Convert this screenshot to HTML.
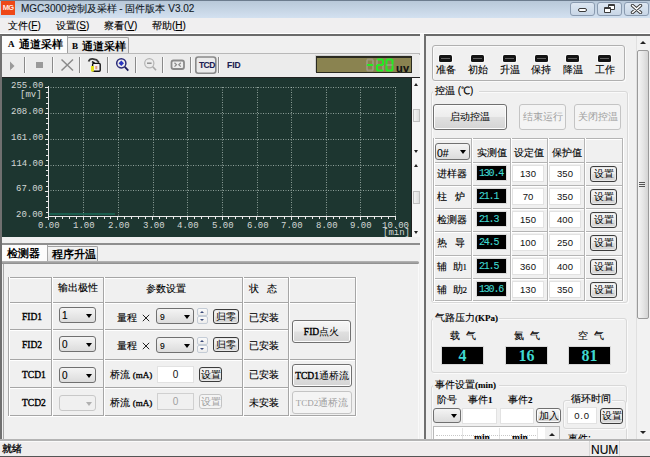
<!DOCTYPE html>
<html><head><meta charset="utf-8">
<style>
*{box-sizing:border-box;margin:0;padding:0}
html,body{width:650px;height:457px;overflow:hidden;background:#f0f0f0;font-family:"Liberation Sans",sans-serif;font-size:10px;color:#000;font-weight:500}
.a{position:absolute}
.t{position:absolute;white-space:nowrap;line-height:1;-webkit-text-stroke:0.12px currentColor}
.btn{position:absolute;border:1px solid #707070;border-radius:3px;background:linear-gradient(#f6f6f6 0%,#ededed 48%,#e0e0e0 52%,#d4d4d4 100%);box-shadow:inset 0 0 0 1px #fcfcfc;text-align:center;white-space:nowrap}
.dbtn{position:absolute;border:1px solid #c4c4c4;border-radius:3px;background:#f4f4f4;color:#a0a0a0;text-align:center;white-space:nowrap}
.combo{position:absolute;border:1px solid #707070;border-radius:3px;background:linear-gradient(#f4f4f4,#dcdcdc)}
.combo:after{content:"";position:absolute;right:3px;top:50%;margin-top:-1.5px;border-left:3.5px solid transparent;border-right:3.5px solid transparent;border-top:4px solid #000}
.inp{position:absolute;background:#fff;border:1px solid #e2e2e2;text-align:center;font-size:9.5px;color:#111}
.blk{position:absolute;background:#000;color:#3fd8d0;border:1px solid #d8d8d8}
.gb{position:absolute;border:1px solid #d8d8d8;border-radius:3px;box-shadow:inset 1px 1px 0 #fafafa,1px 1px 0 #fafafa}
.gb.dk{border-color:#b0b0b0}
.combo.dis{border-color:#c8c8c8;background:#f0f0f0}
.combo.dis:after{border-top-color:#b0b0b0}
.spin{position:absolute;width:11px;height:16px}
.spin:before{content:"";position:absolute;left:0;top:0;width:11px;height:8px;box-sizing:border-box;border:1px solid #c4ccd6;border-radius:2px;background:linear-gradient(#fafafa,#ececec)}
.spin:after{content:"";position:absolute;left:0;top:8px;width:11px;height:8px;box-sizing:border-box;border:1px solid #c4ccd6;border-radius:2px;background:linear-gradient(#fafafa,#ececec)}
.spin i{position:absolute;left:3px;border-left:2.5px solid transparent;border-right:2.5px solid transparent;z-index:1}
.spin i.u{top:3px;border-bottom:2.5px solid #3a4a7a}
.spin i.d{top:11px;border-top:2.5px solid #3a4a7a}
.led{position:absolute;width:13px;height:7px;background:#141414;border-radius:1.5px;box-shadow:0 0 0 1px #fafafa}
.led:after{content:"";position:absolute;left:2px;top:3px;width:9px;height:1px;background:#606060}
.dig{font-family:"Liberation Mono",monospace;font-size:10px;letter-spacing:-1.2px;color:#3fd8d0}
.big{font-family:"Liberation Serif",serif;font-weight:bold;font-size:16px;line-height:17px;text-align:center}
.fb{border:1px solid #3c3c3c;box-shadow:inset 0 0 0 1px #e8e8e8}
.cell{position:absolute;border:1px solid #a9a9a9;box-shadow:inset 1px 1px 0 #fff}
</style></head><body>

<!-- title bar -->
<div class="a" style="left:0;top:0;width:650px;height:18px;background:linear-gradient(#b8c8d9,#d3e1f0);border-top:1px solid #6c7c8e"></div>
<div class="a" style="left:1px;top:1px;width:14px;height:14px;background:#ee4818;color:#ffe8e0;font-size:7.5px;font-weight:bold;line-height:14px;text-align:center;letter-spacing:-0.8px">MG</div>
<div class="t" style="left:21px;top:4px;font-size:10px;color:#141c28">MGC3000控制及采样 - 固件版本 V3.02</div>
<div class="a" style="left:570px;top:2px;width:25px;height:14px;border:1px solid #8a9bb0;border-radius:3px;background:linear-gradient(#dde7f2,#c8d6e6)"></div>
<div class="a" style="left:578px;top:8px;width:9px;height:4px;border:1px solid #3a3a3a;background:#fff;border-radius:2px"></div>
<div class="a" style="left:597px;top:2px;width:25px;height:14px;border:1px solid #8a9bb0;border-radius:3px;background:linear-gradient(#dde7f2,#c8d6e6)"></div>
<div class="a" style="left:608px;top:4px;width:7px;height:6px;border:1px solid #3a3a3a;border-top-width:2px;background:#fff;border-radius:1px"></div>
<div class="a" style="left:604px;top:7px;width:7px;height:6px;border:1px solid #3a3a3a;border-top-width:2px;background:#fff;border-radius:1px"></div>
<div class="a" style="left:624px;top:2px;width:25px;height:14px;border:1px solid #8a9bb0;border-radius:3px;background:linear-gradient(#dde7f2,#c8d6e6)"></div>
<svg class="a" style="left:630px;top:4px" width="13" height="10"><path d="M2.5 1.5 L10.5 8.5 M10.5 1.5 L2.5 8.5" stroke="#3a3a3a" stroke-width="3.4" stroke-linecap="round"/><path d="M2.5 1.5 L10.5 8.5 M10.5 1.5 L2.5 8.5" stroke="#fff" stroke-width="1.6" stroke-linecap="round"/></svg>

<!-- menu bar -->
<div class="a" style="left:0;top:18px;width:650px;height:15px;background:#f0eff0"></div>
<div class="a" style="left:0;top:33px;width:650px;height:1px;background:#fff"></div>
<div class="t" style="left:8px;top:21px;font-size:10px">文件(<u>F</u>)</div>
<div class="t" style="left:56px;top:21px;font-size:10px">设置(<u>S</u>)</div>
<div class="t" style="left:104px;top:21px;font-size:10px">察看(<u>V</u>)</div>
<div class="t" style="left:152px;top:21px;font-size:10px">帮助(<u>H</u>)</div>

<!-- left pane frame -->
<div class="a" style="left:0;top:34px;width:421px;height:405px;border-top:2px solid #6a6a6a;border-left:2px solid #707070;background:#f0f0f0"></div>

<!-- tabs A/B -->
<div class="a" style="left:2px;top:53px;width:419px;height:2px;background:#b8b8b8"></div>
<div class="a" style="left:2px;top:36px;width:66px;height:17px;background:#fcfcfc;border-right:1px solid #a8a8a8"></div>
<div class="t" style="left:8px;top:40px;font-size:9px;font-weight:bold;font-family:'Liberation Serif',serif">A</div>
<div class="t" style="left:19px;top:39px;font-size:10.5px;font-weight:bold;-webkit-text-stroke:0">通道采样</div>
<div class="a" style="left:67px;top:37px;width:62px;height:16px;background:linear-gradient(#f2f2f2,#e4e4e4);border:1px solid #a0a0a0;border-bottom:none;border-radius:2px 2px 0 0"></div>
<div class="t" style="left:72px;top:42px;font-size:9px;font-weight:bold;font-family:'Liberation Serif',serif">B</div>
<div class="t" style="left:82px;top:41px;font-size:10.5px;font-weight:bold;-webkit-text-stroke:0">通道采样</div>

<!-- toolbar -->
<div class="a" style="left:2px;top:54px;width:417px;height:23px;background:#ececec"></div>
<svg class="a" style="left:0;top:50px" width="420" height="28" viewBox="0 50 420 28">
 <g shape-rendering="crispEdges" stroke-width="1"><line x1="24.5" y1="57" x2="24.5" y2="73" stroke="#8a8a8a"/><line x1="25.5" y1="57" x2="25.5" y2="73" stroke="#fafafa"/><line x1="52.5" y1="57" x2="52.5" y2="73" stroke="#8a8a8a"/><line x1="53.5" y1="57" x2="53.5" y2="73" stroke="#fafafa"/><line x1="79.5" y1="57" x2="79.5" y2="73" stroke="#8a8a8a"/><line x1="80.5" y1="57" x2="80.5" y2="73" stroke="#fafafa"/><line x1="107.5" y1="57" x2="107.5" y2="73" stroke="#8a8a8a"/><line x1="108.5" y1="57" x2="108.5" y2="73" stroke="#fafafa"/><line x1="135.5" y1="57" x2="135.5" y2="73" stroke="#8a8a8a"/><line x1="136.5" y1="57" x2="136.5" y2="73" stroke="#fafafa"/><line x1="162.5" y1="57" x2="162.5" y2="73" stroke="#8a8a8a"/><line x1="163.5" y1="57" x2="163.5" y2="73" stroke="#fafafa"/><line x1="190.5" y1="57" x2="190.5" y2="73" stroke="#8a8a8a"/><line x1="191.5" y1="57" x2="191.5" y2="73" stroke="#fafafa"/><line x1="218.5" y1="57" x2="218.5" y2="73" stroke="#8a8a8a"/><line x1="219.5" y1="57" x2="219.5" y2="73" stroke="#fafafa"/></g>
 <path d="M10 61.5 L14.5 66 L10 70.5Z" fill="#9a9a9a"/>
 <rect x="36" y="62" width="7" height="6" fill="#9a9a9a"/>
 <path d="M61.5 59.5 L73 70.5 M73 59.5 L61.5 70.5" stroke="#8a8a8a" stroke-width="1.5"/>
 <g>
  <path d="M88.6 61.5 Q89.5 58.6 92.5 58.8 L96.5 59.8 L99 62.6" fill="none" stroke="#3a3a3a" stroke-width="1.8"/>
  <path d="M92 61.6 L94.5 63" stroke="#111" stroke-width="1.6"/>
  <rect x="92.6" y="63.4" width="7.6" height="7.8" rx="1" fill="#f4f0f4" stroke="#111" stroke-width="1.4"/>
  <rect x="95.3" y="66" width="2" height="3.2" fill="#e09a80"/>
  <rect x="91" y="66" width="3" height="5.5" fill="#e2e21a"/>
 </g>
 <circle cx="121.3" cy="63.3" r="4.6" fill="none" stroke="#2c2c78" stroke-width="1.5"/>
 <path d="M121.3 60.6 L124 63.3 L121.3 66 L118.6 63.3Z" fill="#2a36c0"/>
 <line x1="124.8" y1="66.8" x2="128.3" y2="70.6" stroke="#1c1c5c" stroke-width="1.8"/>
 <circle cx="149.3" cy="63.2" r="4.6" fill="none" stroke="#b4b4b4" stroke-width="1.2"/>
 <line x1="147" y1="63.2" x2="151.6" y2="63.2" stroke="#8c8c8c" stroke-width="1.4"/>
 <line x1="152.8" y1="66.7" x2="156" y2="70.3" stroke="#a8a8a8" stroke-width="1.6"/>
 <rect x="171.5" y="60.5" width="12.5" height="8.5" rx="2" fill="#ededed" stroke="#8a8a8a" stroke-width="1.8"/>
 <path d="M174.5 62.8 l2 1.9 l-2 1.9 M180.8 62.8 l-2 1.9 l2 1.9" stroke="#8a8a8a" stroke-width="1.2" fill="none"/>
 <rect x="195.8" y="57" width="20" height="16.2" rx="2.5" fill="#ebebeb" stroke="#8a8a8a" stroke-width="1.6"/>
</svg>
<div class="t" style="left:199px;top:61px;font-size:8.5px;font-weight:bold;color:#1c1c52;letter-spacing:-0.6px">TCD</div>
<div class="t" style="left:227px;top:61px;font-size:8.5px;font-weight:bold;color:#1c1c52">FID</div>
<!-- LCD -->
<div class="a" style="left:316px;top:56px;width:96px;height:17px;background:#8a8350;border:1px solid #2a2a20;border-top-width:2px;box-shadow:-1px -1px 0 #d0d0d0"></div>
<svg class="a" style="left:355px;top:52px" width="60" height="26" viewBox="355 52 60 26"><g stroke-linecap="round" stroke-width="2">
<line x1="367.8" y1="59.6" x2="372.2" y2="59.6" stroke="#a8a49a" stroke-opacity="0.55"/>
<line x1="373" y1="60.4" x2="373" y2="64.2" stroke="#a8a49a" stroke-opacity="0.55"/>
<line x1="373" y1="66.0" x2="373" y2="69.8" stroke="#a8a49a" stroke-opacity="0.55"/>
<line x1="367.8" y1="70.6" x2="372.2" y2="70.6" stroke="#a8a49a" stroke-opacity="0.55"/>
<line x1="367" y1="66.0" x2="367" y2="69.8" stroke="#a8a49a" stroke-opacity="0.55"/>
<line x1="367" y1="60.4" x2="367" y2="64.2" stroke="#a8a49a" stroke-opacity="0.55"/>
<line x1="367.8" y1="65.1" x2="372.2" y2="65.1" stroke="#22ee22"/>
<line x1="377.8" y1="59.6" x2="382.2" y2="59.6" stroke="#22ee22"/>
<line x1="383" y1="60.4" x2="383" y2="64.2" stroke="#22ee22"/>
<line x1="383" y1="66.0" x2="383" y2="69.8" stroke="#a8a49a" stroke-opacity="0.55"/>
<line x1="377.8" y1="70.6" x2="382.2" y2="70.6" stroke="#22ee22"/>
<line x1="377" y1="66.0" x2="377" y2="69.8" stroke="#22ee22"/>
<line x1="377" y1="60.4" x2="377" y2="64.2" stroke="#a8a49a" stroke-opacity="0.55"/>
<line x1="377.8" y1="65.1" x2="382.2" y2="65.1" stroke="#22ee22"/>
<line x1="387.3" y1="59.6" x2="391.7" y2="59.6" stroke="#22ee22"/>
<line x1="392.5" y1="60.4" x2="392.5" y2="64.2" stroke="#22ee22"/>
<line x1="392.5" y1="66.0" x2="392.5" y2="69.8" stroke="#22ee22"/>
<line x1="387.3" y1="70.6" x2="391.7" y2="70.6" stroke="#22ee22"/>
<line x1="386.5" y1="66.0" x2="386.5" y2="69.8" stroke="#22ee22"/>
<line x1="386.5" y1="60.4" x2="386.5" y2="64.2" stroke="#22ee22"/>
<line x1="387.3" y1="65.1" x2="391.7" y2="65.1" stroke="#a8a49a" stroke-opacity="0.55"/>
</g></svg>
<div class="t" style="left:396px;top:63px;font-size:11px;font-weight:bold;color:#111;letter-spacing:0.3px">uv</div>

<!-- chart -->
<svg class="a" style="left:2px;top:77px" width="409" height="160" viewBox="2 77 409 160">
 <rect x="2" y="77" width="409" height="160" fill="#1d3630"/>
 <g stroke="#b4c4bc" stroke-width="1" stroke-dasharray="1 1.5" stroke-opacity="0.75">
  <line x1="83.5" y1="87" x2="83.5" y2="216"/>
  <line x1="118.5" y1="87" x2="118.5" y2="216"/>
  <line x1="153.5" y1="87" x2="153.5" y2="216"/>
  <line x1="187.5" y1="87" x2="187.5" y2="216"/>
  <line x1="222.5" y1="87" x2="222.5" y2="216"/>
  <line x1="257.5" y1="87" x2="257.5" y2="216"/>
  <line x1="291.5" y1="87" x2="291.5" y2="216"/>
  <line x1="326.5" y1="87" x2="326.5" y2="216"/>
  <line x1="360.5" y1="87" x2="360.5" y2="216"/>
  <line x1="395.5" y1="87" x2="395.5" y2="216"/>
  <line x1="48" y1="87.5" x2="396" y2="87.5"/>
  <line x1="48" y1="113.5" x2="396" y2="113.5"/>
  <line x1="48" y1="139.5" x2="396" y2="139.5"/>
  <line x1="48" y1="165.5" x2="396" y2="165.5"/>
  <line x1="48" y1="190.5" x2="396" y2="190.5"/>
 </g>
 <line x1="49" y1="214" x2="115" y2="214" stroke="#1a6c58" stroke-width="1.5"/>
 <g stroke="#e8e8e8" stroke-width="1" shape-rendering="crispEdges">
  <line x1="48.5" y1="86" x2="48.5" y2="218"/>
  <line x1="48" y1="216.5" x2="396" y2="216.5"/>
 </g>
 <g id="ticks" stroke="#e8e8e8" stroke-width="1" shape-rendering="crispEdges"><line x1="45" y1="87.5" x2="49" y2="87.5"/>
<line x1="46" y1="92.5" x2="49" y2="92.5"/>
<line x1="46" y1="97.5" x2="49" y2="97.5"/>
<line x1="46" y1="103.5" x2="49" y2="103.5"/>
<line x1="46" y1="108.5" x2="49" y2="108.5"/>
<line x1="45" y1="113.5" x2="49" y2="113.5"/>
<line x1="46" y1="118.5" x2="49" y2="118.5"/>
<line x1="46" y1="123.5" x2="49" y2="123.5"/>
<line x1="46" y1="129.5" x2="49" y2="129.5"/>
<line x1="46" y1="134.5" x2="49" y2="134.5"/>
<line x1="45" y1="139.5" x2="49" y2="139.5"/>
<line x1="46" y1="144.5" x2="49" y2="144.5"/>
<line x1="46" y1="149.5" x2="49" y2="149.5"/>
<line x1="46" y1="155.5" x2="49" y2="155.5"/>
<line x1="46" y1="160.5" x2="49" y2="160.5"/>
<line x1="45" y1="165.5" x2="49" y2="165.5"/>
<line x1="46" y1="170.5" x2="49" y2="170.5"/>
<line x1="46" y1="175.5" x2="49" y2="175.5"/>
<line x1="46" y1="181.5" x2="49" y2="181.5"/>
<line x1="46" y1="186.5" x2="49" y2="186.5"/>
<line x1="45" y1="191.5" x2="49" y2="191.5"/>
<line x1="46" y1="196.5" x2="49" y2="196.5"/>
<line x1="46" y1="201.5" x2="49" y2="201.5"/>
<line x1="46" y1="207.5" x2="49" y2="207.5"/>
<line x1="46" y1="212.5" x2="49" y2="212.5"/>
<line x1="45" y1="217.5" x2="49" y2="217.5"/>
<line x1="48.5" y1="216" x2="48.5" y2="220"/>
<line x1="55.5" y1="216" x2="55.5" y2="219"/>
<line x1="62.5" y1="216" x2="62.5" y2="219"/>
<line x1="69.5" y1="216" x2="69.5" y2="219"/>
<line x1="76.5" y1="216" x2="76.5" y2="219"/>
<line x1="83.5" y1="216" x2="83.5" y2="220"/>
<line x1="90.5" y1="216" x2="90.5" y2="219"/>
<line x1="97.5" y1="216" x2="97.5" y2="219"/>
<line x1="104.5" y1="216" x2="104.5" y2="219"/>
<line x1="110.5" y1="216" x2="110.5" y2="219"/>
<line x1="117.5" y1="216" x2="117.5" y2="220"/>
<line x1="124.5" y1="216" x2="124.5" y2="219"/>
<line x1="131.5" y1="216" x2="131.5" y2="219"/>
<line x1="138.5" y1="216" x2="138.5" y2="219"/>
<line x1="145.5" y1="216" x2="145.5" y2="219"/>
<line x1="152.5" y1="216" x2="152.5" y2="220"/>
<line x1="159.5" y1="216" x2="159.5" y2="219"/>
<line x1="166.5" y1="216" x2="166.5" y2="219"/>
<line x1="173.5" y1="216" x2="173.5" y2="219"/>
<line x1="180.5" y1="216" x2="180.5" y2="219"/>
<line x1="187.5" y1="216" x2="187.5" y2="220"/>
<line x1="194.5" y1="216" x2="194.5" y2="219"/>
<line x1="201.5" y1="216" x2="201.5" y2="219"/>
<line x1="208.5" y1="216" x2="208.5" y2="219"/>
<line x1="215.5" y1="216" x2="215.5" y2="219"/>
<line x1="222.5" y1="216" x2="222.5" y2="220"/>
<line x1="228.5" y1="216" x2="228.5" y2="219"/>
<line x1="235.5" y1="216" x2="235.5" y2="219"/>
<line x1="242.5" y1="216" x2="242.5" y2="219"/>
<line x1="249.5" y1="216" x2="249.5" y2="219"/>
<line x1="256.5" y1="216" x2="256.5" y2="220"/>
<line x1="263.5" y1="216" x2="263.5" y2="219"/>
<line x1="270.5" y1="216" x2="270.5" y2="219"/>
<line x1="277.5" y1="216" x2="277.5" y2="219"/>
<line x1="284.5" y1="216" x2="284.5" y2="219"/>
<line x1="291.5" y1="216" x2="291.5" y2="220"/>
<line x1="298.5" y1="216" x2="298.5" y2="219"/>
<line x1="305.5" y1="216" x2="305.5" y2="219"/>
<line x1="312.5" y1="216" x2="312.5" y2="219"/>
<line x1="319.5" y1="216" x2="319.5" y2="219"/>
<line x1="326.5" y1="216" x2="326.5" y2="220"/>
<line x1="333.5" y1="216" x2="333.5" y2="219"/>
<line x1="339.5" y1="216" x2="339.5" y2="219"/>
<line x1="346.5" y1="216" x2="346.5" y2="219"/>
<line x1="353.5" y1="216" x2="353.5" y2="219"/>
<line x1="360.5" y1="216" x2="360.5" y2="220"/>
<line x1="367.5" y1="216" x2="367.5" y2="219"/>
<line x1="374.5" y1="216" x2="374.5" y2="219"/>
<line x1="381.5" y1="216" x2="381.5" y2="219"/>
<line x1="388.5" y1="216" x2="388.5" y2="219"/>
<line x1="395.5" y1="216" x2="395.5" y2="220"/></g>
 <g font-family="Liberation Mono" font-size="9" fill="#d4d8d6">
  <text x="11" y="88">255.00</text>
  <text x="20" y="97">[mv]</text>
  <text x="11" y="114">208.00</text>
  <text x="11" y="140">161.00</text>
  <text x="11" y="166">114.00</text>
  <text x="16" y="191">67.00</text>
  <text x="16" y="217">20.00</text>
  <text x="38" y="228">0.00</text>
  <text x="73" y="228">1.00</text>
  <text x="108" y="228">2.00</text>
  <text x="143" y="228">3.00</text>
  <text x="177" y="228">4.00</text>
  <text x="212" y="228">5.00</text>
  <text x="247" y="228">6.00</text>
  <text x="281" y="228">7.00</text>
  <text x="316" y="228">8.00</text>
  <text x="350" y="228">9.00</text>
  <text x="382" y="228">10.00</text>
  <text x="383" y="235">[min]</text>
 </g>
</svg>


<!-- bottom tabs -->
<div class="a" style="left:2px;top:243px;width:418px;height:2px;background:#8e8e8e"></div>
<div class="a" style="left:2px;top:245px;width:46px;height:16px;background:#fcfcfc;border-right:1px solid #a8a8a8"></div>
<div class="t" style="left:7px;top:248px;font-size:10.5px;font-weight:bold;-webkit-text-stroke:0">检测器</div>
<div class="a" style="left:48px;top:246px;width:50px;height:15px;background:linear-gradient(#f4f4f4,#e2e2e2);border:1px solid #a0a0a0;border-left:none;border-bottom:none;border-radius:0 2px 0 0"></div>
<div class="t" style="left:52px;top:249px;font-size:10.5px;font-weight:bold;-webkit-text-stroke:0">程序升温</div>
<div class="a" style="left:2px;top:261px;width:417px;height:3px;background:linear-gradient(#b8b8b8,#8a8a8a);border-radius:0 2px 2px 0"></div>
<div class="a" style="left:3px;top:264px;width:1px;height:175px;background:#a8a8a8"></div>
<div class="a" style="left:418px;top:264px;width:1px;height:175px;background:#fafafa"></div>

<!-- detector table -->
<div class="a" style="left:8px;top:277px;width:348px;height:1px;background:#a6a6a6"></div>
<div class="a" style="left:8px;top:278px;width:348px;height:1px;background:#fff"></div>
<div class="a" style="left:8px;top:302px;width:348px;height:1px;background:#a6a6a6"></div>
<div class="a" style="left:8px;top:303px;width:348px;height:1px;background:#fff"></div>
<div class="a" style="left:8px;top:359px;width:348px;height:1px;background:#a6a6a6"></div>
<div class="a" style="left:8px;top:360px;width:348px;height:1px;background:#fff"></div>
<div class="a" style="left:8px;top:415px;width:348px;height:1px;background:#a6a6a6"></div>
<div class="a" style="left:8px;top:416px;width:348px;height:1px;background:#fff"></div>
<div class="a" style="left:8px;top:329px;width:281px;height:1px;background:#a6a6a6"></div>
<div class="a" style="left:8px;top:330px;width:281px;height:1px;background:#fff"></div>
<div class="a" style="left:8px;top:387px;width:281px;height:1px;background:#a6a6a6"></div>
<div class="a" style="left:8px;top:388px;width:281px;height:1px;background:#fff"></div>
<div class="a" style="left:8px;top:277px;width:1px;height:139px;background:#a6a6a6"></div>
<div class="a" style="left:9px;top:277px;width:1px;height:139px;background:#fff"></div>
<div class="a" style="left:51px;top:277px;width:1px;height:139px;background:#a6a6a6"></div>
<div class="a" style="left:52px;top:277px;width:1px;height:139px;background:#fff"></div>
<div class="a" style="left:103px;top:277px;width:1px;height:139px;background:#a6a6a6"></div>
<div class="a" style="left:104px;top:277px;width:1px;height:139px;background:#fff"></div>
<div class="a" style="left:242px;top:277px;width:1px;height:139px;background:#a6a6a6"></div>
<div class="a" style="left:243px;top:277px;width:1px;height:139px;background:#fff"></div>
<div class="a" style="left:288px;top:277px;width:1px;height:139px;background:#a6a6a6"></div>
<div class="a" style="left:289px;top:277px;width:1px;height:139px;background:#fff"></div>
<div class="a" style="left:355px;top:277px;width:1px;height:139px;background:#a6a6a6"></div>
<div class="a" style="left:356px;top:277px;width:1px;height:139px;background:#fff"></div>
<div class="t" style="left:58px;top:283px">输出极性</div>
<div class="t" style="left:146px;top:284px">参数设置</div>
<div class="t" style="left:249px;top:284px">状&nbsp;&nbsp;&nbsp;态</div>
<div class="t" style="left:22px;top:313px;font-family:'Liberation Serif',serif;font-size:9.5px;-webkit-text-stroke:0.35px #000">FID1</div>
<div class="t" style="left:22px;top:341px;font-family:'Liberation Serif',serif;font-size:9.5px;-webkit-text-stroke:0.35px #000">FID2</div>
<div class="t" style="left:22px;top:371px;font-family:'Liberation Serif',serif;font-size:9.5px;-webkit-text-stroke:0.35px #000">TCD1</div>
<div class="t" style="left:22px;top:399px;font-family:'Liberation Serif',serif;font-size:9.5px;-webkit-text-stroke:0.35px #000">TCD2</div>
<div class="combo" style="left:59px;top:307px;width:37px;height:16px"><span class="t" style="left:2px;top:3px;font-size:10px">1</span></div>
<div class="combo" style="left:59px;top:336px;width:37px;height:16px"><span class="t" style="left:2px;top:3px;font-size:10px">0</span></div>
<div class="combo" style="left:59px;top:367px;width:37px;height:16px"><span class="t" style="left:2px;top:3px;font-size:10px">0</span></div>
<div class="combo dis" style="left:59px;top:395px;width:37px;height:16px"></div>
<div class="t" style="left:117px;top:313px">量程</div>
<svg class="a" style="left:142px;top:314px" width="8" height="8"><path d="M0.8 0.8 L7.2 7.2 M7.2 0.8 L0.8 7.2" stroke="#222" stroke-width="1"/></svg>
<div class="combo" style="left:156px;top:308px;width:38px;height:16px"><span class="t" style="left:3px;top:4px;font-size:8.5px">9</span></div>
<div class="spin" style="left:197px;top:308px"><i class="u"></i><i class="d"></i></div>
<div class="btn fb" style="left:213px;top:309px;width:26px;height:15px;font-size:10px;line-height:13px">归零</div>
<div class="t" style="left:117px;top:341px">量程</div>
<svg class="a" style="left:142px;top:342px" width="8" height="8"><path d="M0.8 0.8 L7.2 7.2 M7.2 0.8 L0.8 7.2" stroke="#222" stroke-width="1"/></svg>
<div class="combo" style="left:156px;top:337px;width:38px;height:16px"><span class="t" style="left:3px;top:4px;font-size:8.5px">9</span></div>
<div class="spin" style="left:197px;top:337px"><i class="u"></i><i class="d"></i></div>
<div class="btn fb" style="left:213px;top:337px;width:26px;height:15px;font-size:10px;line-height:13px">归零</div>
<div class="t" style="left:110px;top:370px">桥流 <span style="font-family:'Liberation Serif',serif;font-size:9px;-webkit-text-stroke:0.3px #000">(mA)</span></div>
<div class="t" style="left:110px;top:398px">桥流 <span style="font-family:'Liberation Serif',serif;font-size:9px;-webkit-text-stroke:0.3px #000">(mA)</span></div>
<div class="inp" style="left:157px;top:366px;width:37px;height:17px;font-size:10px;line-height:15px">0</div>
<div class="inp" style="left:157px;top:393px;width:37px;height:17px;font-size:10px;line-height:15px;background:#f0f0f0;color:#a0a0a0;border-color:#d0d0d0">0</div>
<div class="btn fb" style="left:199px;top:367px;width:23px;height:15px;font-size:10px;line-height:13px">设置</div>
<div class="dbtn" style="left:199px;top:394px;width:23px;height:15px;font-size:10px;line-height:13px">设置</div>
<div class="t" style="left:249px;top:313px">已安装</div>
<div class="t" style="left:249px;top:341px">已安装</div>
<div class="t" style="left:249px;top:370px">已安装</div>
<div class="t" style="left:249px;top:398px">未安装</div>
<div class="btn" style="left:292px;top:320px;width:59px;height:23px;font-size:10px;line-height:21px"><span style="font-family:'Liberation Serif',serif;font-size:9.5px;-webkit-text-stroke:0.35px #000">FID</span>点火</div>
<div class="btn" style="left:292px;top:364px;width:60px;height:23px;font-size:10px;line-height:21px"><span style="font-family:'Liberation Serif',serif;font-size:9.5px;-webkit-text-stroke:0.35px #000">TCD1</span>通桥流</div>
<div class="dbtn" style="left:292px;top:391px;width:60px;height:23px;font-size:10px;line-height:21px"><span style="font-family:'Liberation Serif',serif;font-size:9px">TCD2</span>通桥流</div>

<!-- right pane -->
<div class="a" style="left:420px;top:34px;width:4px;height:405px;background:#f6f6f6"></div>
<div class="a" style="left:424px;top:34px;width:226px;height:405px;border-top:2px solid #6a6a6a;border-left:2px solid #707070;background:#f0f0f0"></div>


<!-- right content -->
<div class="gb dk" style="left:432px;top:45px;width:193px;height:36px"></div>
<div class="led" style="left:439px;top:55px"></div>
<div class="led" style="left:471px;top:55px"></div>
<div class="led" style="left:503px;top:55px"></div>
<div class="led" style="left:535px;top:55px"></div>
<div class="led" style="left:566px;top:55px"></div>
<div class="led" style="left:598px;top:55px"></div>
<div class="t" style="left:436px;top:65px">准备</div>
<div class="t" style="left:468px;top:65px">初始</div>
<div class="t" style="left:500px;top:65px">升温</div>
<div class="t" style="left:531px;top:65px">保持</div>
<div class="t" style="left:563px;top:65px">降温</div>
<div class="t" style="left:595px;top:65px">工作</div>

<div class="gb" style="left:431px;top:91px;width:197px;height:212px"></div>
<div class="a" style="left:433px;top:85px;width:46px;height:12px;background:#f0f0f0"></div>
<div class="t" style="left:435px;top:86px">控温 (℃)</div>
<div class="btn" style="left:433px;top:104px;width:74px;height:26px;line-height:24px">启动控温</div>
<div class="dbtn" style="left:519px;top:104px;width:47px;height:26px;line-height:24px">结束运行</div>
<div class="dbtn" style="left:574px;top:104px;width:47px;height:26px;line-height:24px">关闭控温</div>
<div class="a" style="left:433px;top:138px;width:190px;height:1px;background:#b4b4b4"></div>
<div class="a" style="left:433px;top:139px;width:190px;height:1px;background:#fff"></div>
<div class="a" style="left:433px;top:162px;width:190px;height:1px;background:#b4b4b4"></div>
<div class="a" style="left:433px;top:163px;width:190px;height:1px;background:#fff"></div>
<div class="a" style="left:433px;top:185px;width:190px;height:1px;background:#b4b4b4"></div>
<div class="a" style="left:433px;top:186px;width:190px;height:1px;background:#fff"></div>
<div class="a" style="left:433px;top:208px;width:190px;height:1px;background:#b4b4b4"></div>
<div class="a" style="left:433px;top:209px;width:190px;height:1px;background:#fff"></div>
<div class="a" style="left:433px;top:231px;width:190px;height:1px;background:#b4b4b4"></div>
<div class="a" style="left:433px;top:232px;width:190px;height:1px;background:#fff"></div>
<div class="a" style="left:433px;top:255px;width:190px;height:1px;background:#b4b4b4"></div>
<div class="a" style="left:433px;top:256px;width:190px;height:1px;background:#fff"></div>
<div class="a" style="left:433px;top:278px;width:190px;height:1px;background:#b4b4b4"></div>
<div class="a" style="left:433px;top:279px;width:190px;height:1px;background:#fff"></div>
<div class="a" style="left:433px;top:300px;width:190px;height:1px;background:#b4b4b4"></div>
<div class="a" style="left:433px;top:301px;width:190px;height:1px;background:#fff"></div>
<div class="a" style="left:433px;top:138px;width:1px;height:163px;background:#b4b4b4"></div>
<div class="a" style="left:434px;top:138px;width:1px;height:163px;background:#fff"></div>
<div class="a" style="left:471px;top:138px;width:1px;height:163px;background:#b4b4b4"></div>
<div class="a" style="left:472px;top:138px;width:1px;height:163px;background:#fff"></div>
<div class="a" style="left:510px;top:138px;width:1px;height:163px;background:#b4b4b4"></div>
<div class="a" style="left:511px;top:138px;width:1px;height:163px;background:#fff"></div>
<div class="a" style="left:547px;top:138px;width:1px;height:163px;background:#b4b4b4"></div>
<div class="a" style="left:548px;top:138px;width:1px;height:163px;background:#fff"></div>
<div class="a" style="left:584px;top:138px;width:1px;height:163px;background:#b4b4b4"></div>
<div class="a" style="left:585px;top:138px;width:1px;height:163px;background:#fff"></div>
<div class="a" style="left:622px;top:138px;width:1px;height:163px;background:#b4b4b4"></div>
<div class="a" style="left:623px;top:138px;width:1px;height:163px;background:#fff"></div>
<!-- rows -->
<div class="t" style="left:437px;top:169px">进样器</div>
<div class="blk" style="left:476px;top:165px;width:31px;height:16px"><span class="t dig" style="left:2px;top:3px">130.4</span></div>
<div class="inp" style="left:512px;top:165px;width:32px;height:17px;line-height:16px">130</div>
<div class="inp" style="left:549px;top:165px;width:32px;height:17px;line-height:16px">350</div>
<div class="btn fb" style="left:590px;top:166px;width:27px;height:16px;line-height:13px">设置</div>
<div class="t" style="left:437px;top:192px">柱&nbsp;&nbsp;&nbsp;炉</div>
<div class="blk" style="left:476px;top:188px;width:31px;height:16px"><span class="t dig" style="left:2px;top:3px">21.1</span></div>
<div class="inp" style="left:512px;top:188px;width:32px;height:17px;line-height:16px">70</div>
<div class="inp" style="left:549px;top:188px;width:32px;height:17px;line-height:16px">350</div>
<div class="btn fb" style="left:590px;top:189px;width:27px;height:16px;line-height:13px">设置</div>
<div class="t" style="left:437px;top:215px">检测器</div>
<div class="blk" style="left:476px;top:211px;width:31px;height:16px"><span class="t dig" style="left:2px;top:3px">21.3</span></div>
<div class="inp" style="left:512px;top:211px;width:32px;height:17px;line-height:16px">150</div>
<div class="inp" style="left:549px;top:211px;width:32px;height:17px;line-height:16px">400</div>
<div class="btn fb" style="left:590px;top:212px;width:27px;height:16px;line-height:13px">设置</div>
<div class="t" style="left:437px;top:238px">热&nbsp;&nbsp;&nbsp;导</div>
<div class="blk" style="left:476px;top:234px;width:31px;height:16px"><span class="t dig" style="left:2px;top:3px">24.5</span></div>
<div class="inp" style="left:512px;top:234px;width:32px;height:17px;line-height:16px">100</div>
<div class="inp" style="left:549px;top:234px;width:32px;height:17px;line-height:16px">250</div>
<div class="btn fb" style="left:590px;top:235px;width:27px;height:16px;line-height:13px">设置</div>
<div class="t" style="left:437px;top:262px">辅&nbsp;&nbsp;助<span style="font-family:Liberation Serif;font-size:9px">1</span></div>
<div class="blk" style="left:476px;top:258px;width:31px;height:16px"><span class="t dig" style="left:2px;top:3px">21.5</span></div>
<div class="inp" style="left:512px;top:258px;width:32px;height:17px;line-height:16px">360</div>
<div class="inp" style="left:549px;top:258px;width:32px;height:17px;line-height:16px">400</div>
<div class="btn fb" style="left:590px;top:259px;width:27px;height:16px;line-height:13px">设置</div>
<div class="t" style="left:437px;top:285px">辅&nbsp;&nbsp;助<span style="font-family:Liberation Serif;font-size:9px">2</span></div>
<div class="blk" style="left:476px;top:281px;width:31px;height:16px"><span class="t dig" style="left:2px;top:3px">130.6</span></div>
<div class="inp" style="left:512px;top:281px;width:32px;height:17px;line-height:16px">130</div>
<div class="inp" style="left:549px;top:281px;width:32px;height:17px;line-height:16px">350</div>
<div class="btn fb" style="left:590px;top:282px;width:27px;height:16px;line-height:13px">设置</div>
<div class="combo" style="left:435px;top:143px;width:35px;height:17px"><span class="t" style="left:1px;top:4px;font-size:10.5px">0#</span></div>
<div class="t" style="left:477px;top:148px">实测值</div>
<div class="t" style="left:514px;top:148px">设定值</div>
<div class="t" style="left:552px;top:148px">保护值</div>

<div class="gb" style="left:431px;top:318px;width:196px;height:55px"></div>
<div class="a" style="left:433px;top:312px;width:66px;height:12px;background:#f0f0f0"></div>
<div class="t" style="left:435px;top:313px">气路压力<span style="font-family:'Liberation Serif',serif;font-weight:bold;font-size:9px">(KPa)</span></div>
<div class="t" style="left:450px;top:331px">载&nbsp;&nbsp;气</div>
<div class="t" style="left:514px;top:331px">氦&nbsp;&nbsp;气</div>
<div class="t" style="left:578px;top:331px">空&nbsp;&nbsp;气</div>
<div class="blk big" style="left:441px;top:346px;width:43px;height:19px">4</div>
<div class="blk big" style="left:505px;top:346px;width:43px;height:19px">16</div>
<div class="blk big" style="left:568px;top:346px;width:43px;height:19px">81</div>

<div class="gb" style="left:431px;top:385px;width:196px;height:60px"></div>
<div class="a" style="left:433px;top:379px;width:66px;height:12px;background:#f0f0f0"></div>
<div class="t" style="left:435px;top:380px">事件设置<span style="font-family:'Liberation Serif',serif;font-weight:bold;font-size:9px">(min)</span></div>
<div class="t" style="left:437px;top:395px">阶号</div>
<div class="t" style="left:468px;top:395px">事件<span style="font-family:'Liberation Serif',serif;font-weight:bold;font-size:9px">1</span></div>
<div class="t" style="left:508px;top:395px">事件<span style="font-family:'Liberation Serif',serif;font-weight:bold;font-size:9px">2</span></div>
<div class="combo" style="left:433px;top:408px;width:28px;height:15px"></div>
<div class="inp" style="left:462px;top:408px;width:35px;height:16px"></div>
<div class="inp" style="left:500px;top:408px;width:34px;height:16px"></div>
<div class="btn" style="left:536px;top:408px;width:25px;height:15px;line-height:13px">加入</div>
<div class="gb" style="left:563px;top:400px;width:63px;height:29px"></div>
<div class="t" style="left:570px;top:394px;background:#f0f0f0;padding:0 1px">循环时间</div>
<div class="inp" style="left:567px;top:407px;width:30px;height:17px;line-height:16px;font-size:9.5px;letter-spacing:0.8px">0.0</div>
<div class="btn fb" style="left:600px;top:408px;width:23px;height:16px;line-height:13px">设置</div>
<div class="a" style="left:433px;top:426px;width:127px;height:14px;background:#fff;border:1px solid #b8b8b8;border-bottom:none"></div>
<div class="a" style="left:462px;top:428px;width:1px;height:11px;background:#e4e4e4"></div>
<div class="a" style="left:499px;top:428px;width:1px;height:11px;background:#e4e4e4"></div>
<div class="a" style="left:537px;top:428px;width:1px;height:11px;background:#e4e4e4"></div>
<div class="a" style="left:545px;top:427px;width:14px;height:12px;background:#f0f0f0"></div>
<div class="a" style="left:549px;top:433px;border-left:3px solid transparent;border-right:3px solid transparent;border-bottom:3px solid #222"></div>
<div class="a" style="left:436px;top:435px;width:100px;height:1px;border-top:1px dotted #c8c8c8"></div>
<div class="t" style="left:474px;top:434px;font-family:'Liberation Serif',serif;font-weight:bold;font-size:9.5px">min</div>
<div class="t" style="left:512px;top:434px;font-family:'Liberation Serif',serif;font-weight:bold;font-size:9.5px">min</div>
<div class="t" style="left:568px;top:434px">事件:</div>

<!-- right scrollbar -->
<div class="a" style="left:636px;top:36px;width:14px;height:403px;background:#f2f2f2;border-left:1px solid #e0e0e0"></div>
<div class="a" style="left:640px;top:41px;border-left:3px solid transparent;border-right:3px solid transparent;border-bottom:3px solid #222"></div>
<div class="a" style="left:640px;top:431px;border-left:3px solid transparent;border-right:3px solid transparent;border-top:3px solid #222"></div>
<div class="a" style="left:637px;top:50px;width:12px;height:269px;border:1px solid #9a9a9a;border-radius:2px;background:linear-gradient(90deg,#f4f4f4,#e6e6e6 50%,#d4d4d4)"></div>
<div class="a" style="left:639px;top:182px;width:6px;height:1px;background:#555;box-shadow:0 2px 0 #555,0 4px 0 #555"></div>
<!-- chart scrollbars -->
<div class="a" style="left:411px;top:78px;width:9px;height:159px;background:#f6f6f6;border-left:1px solid #202020"></div>
<div class="a" style="left:2px;top:77px;width:418px;height:1px;background:#222"></div>
<div class="a" style="left:414px;top:83px;border-left:2.5px solid transparent;border-right:2.5px solid transparent;border-bottom:3px solid #222"></div>
<div class="a" style="left:414px;top:150px;border-left:2.5px solid transparent;border-right:2.5px solid transparent;border-top:3px solid #222"></div>
<div class="a" style="left:414px;top:164px;border-left:2.5px solid transparent;border-right:2.5px solid transparent;border-bottom:3px solid #222"></div>
<div class="a" style="left:414px;top:231px;border-left:2.5px solid transparent;border-right:2.5px solid transparent;border-top:3px solid #222"></div>
<div class="a" style="left:413px;top:109px;width:7px;height:13px;border:1px solid #c0c0c0;background:linear-gradient(90deg,#f4f4f4,#dedede)"></div>
<div class="a" style="left:413px;top:191px;width:7px;height:13px;border:1px solid #c0c0c0;background:linear-gradient(90deg,#f4f4f4,#dedede)"></div>

<!-- status bar -->
<div class="a" style="left:0;top:439px;width:650px;height:18px;background:#efeded;border-top:2px solid #b4b4b4;box-shadow:inset 0 1px 0 #fafafa"></div>
<div class="t" style="left:2px;top:444px;font-size:10px;-webkit-text-stroke:0.3px #000">就绪</div>
<div class="a" style="left:589px;top:441px;width:31px;height:15px;border-left:1px solid #d8d8d8;border-right:1px solid #d8d8d8"></div>
<div class="t" style="left:591px;top:444px;font-size:12px">NUM</div>
<div class="a" style="left:0;top:456px;width:650px;height:1px;background:#555"></div>

</body></html>
